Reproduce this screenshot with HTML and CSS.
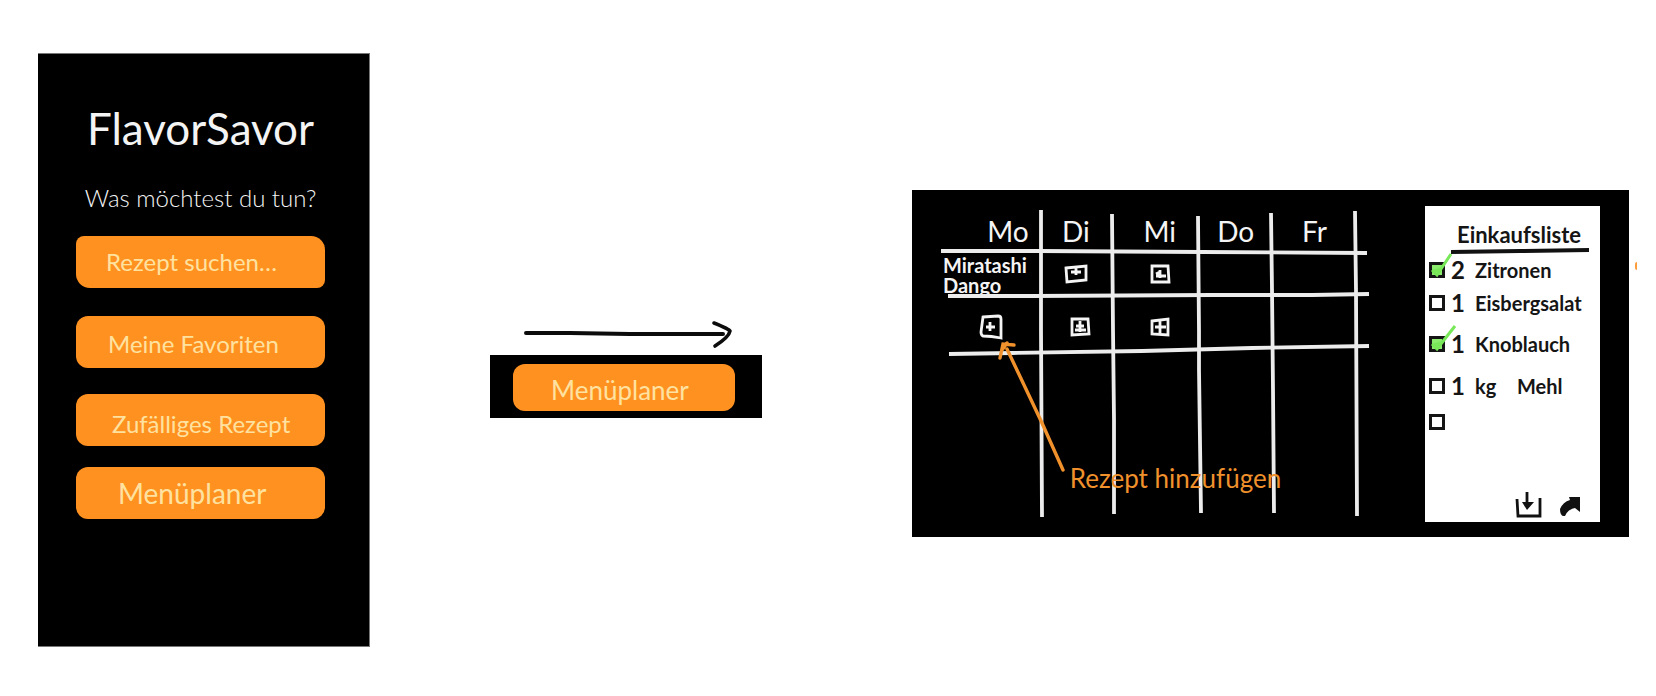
FILE: index.html
```
<!DOCTYPE html>
<html lang="de">
<head>
<meta charset="utf-8">
<meta name="viewport" content="width=device-width, initial-scale=1">
<title>FlavorSavor</title>
<link rel="stylesheet" href="styles.css">
</head>
<body>
<main class="board">
  <section class="phone">
    <h1 class="brand">FlavorSavor</h1>
    <p class="question">Was möchtest du tun?</p>
    <nav class="menu">
      <button class="pill pill-search" type="button">Rezept suchen…</button>
      <button class="pill pill-favs" type="button">Meine Favoriten</button>
      <button class="pill pill-random" type="button">Zufälliges Rezept</button>
      <button class="pill pill-planner" type="button">Menüplaner</button>
    </nav>
  </section>

  <section class="step">
    <svg class="step-arrow" viewBox="0 0 272 35" aria-hidden="true">
      <path d="M36 13 L80 13 L140 14 L233 14" stroke-width="4"/>
      <path d="M224 3 Q239 9 240 11 Q239 17 225 26" stroke-width="3.6"/>
    </svg>
    <div class="step-frame">
      <button class="pill pill-step" type="button">Menüplaner</button>
    </div>
  </section>

  <section class="planner">
    <table class="week">
      <colgroup><col class="c-mo"><col class="c-di"><col class="c-mi"><col class="c-do"><col class="c-fr"></colgroup>
      <thead>
        <tr><th class="mo">Mo</th><th>Di</th><th class="mi">Mi</th><th>Do</th><th>Fr</th></tr>
      </thead>
      <tbody>
        <tr class="row-one">
          <td class="dish">Miratashi Dango</td>
          <td><button class="add" type="button" aria-label="Rezept hinzufügen"><svg viewBox="0 0 24 20"><path d="M2 4 L22 2 L22 16 L3 18 Z M7 8 H17 M12 4 V11"/></svg></button></td>
          <td class="mi"><button class="add" type="button" aria-label="Rezept hinzufügen"><svg viewBox="0 0 24 20"><path d="M4 2 L20 2 L21 18 L4 18 Z M8 12 H18 M12 6 V14 M8 10 L12 8"/></svg></button></td>
          <td></td><td></td>
        </tr>
        <tr class="row-two">
          <td><button class="add add-large" type="button" aria-label="Rezept hinzufügen"><svg viewBox="0 0 24 26"><path d="M4 3 L19 2 Q22 2 22 5 L22 24 Q12 22 4 22 Q2 21 2 18 Z M7 13 H16 M11 8 V17"/></svg></button></td>
          <td class="late"><button class="add" type="button" aria-label="Rezept hinzufügen"><svg viewBox="0 0 24 20"><path d="M4 2 L20 2 L21 17 L4 18 Z M7 13 H18 M12 4 V15 M8 9 H16"/></svg></button></td>
          <td class="mi"><button class="add" type="button" aria-label="Rezept hinzufügen"><svg viewBox="0 0 24 20"><path d="M4 4 L20 2 L20 18 L4 17 Z M7 10 H18 M12 4 V16"/></svg></button></td>
          <td></td><td></td>
        </tr>
        <tr class="row-rest"><td></td><td></td><td></td><td></td><td></td></tr>
      </tbody>
    </table>

    <form class="list">
      <h2 class="list-title">Einkaufsliste</h2>
      <svg class="rule" viewBox="0 0 140 6" aria-hidden="true"><path d="M1 4 L70 3 L139 2"/></svg>
      <ul class="items">
        <li><label class="item"><input class="tick" type="checkbox" checked><span class="qty">2</span><span>Zitronen</span>
          <svg class="mark" viewBox="0 0 32 32" aria-hidden="true"><path d="M5 20 L10 25 L24 4 M7 21 L14 19"/></svg></label></li>
        <li><label class="item"><input class="tick" type="checkbox"><span class="qty">1</span><span>Eisbergsalat</span></label></li>
        <li><label class="item"><input class="tick" type="checkbox" checked><span class="qty">1</span><span>Knoblauch</span>
          <svg class="mark" viewBox="0 0 32 32" aria-hidden="true"><path d="M5 20 L10 25 L28 2 M7 21 L14 19"/></svg></label></li>
        <li><label class="item"><input class="tick" type="checkbox"><span class="qty">1</span><span class="unit">kg</span><span>Mehl</span></label></li>
        <li><label class="item"><input class="tick" type="checkbox" aria-label="Neuer Eintrag"></label></li>
      </ul>
      <div class="actions">
        <button class="icon" type="button" aria-label="Speichern"><svg viewBox="0 0 28 28"><path d="M3 9 L4 26 L26 26 L26 8 M13 2 V15" fill="none" stroke="#111" stroke-width="2.8"/><path d="M8 12 H20 L13 20 Z" fill="#111"/></svg></button>
        <button class="icon" type="button" aria-label="Teilen"><svg viewBox="0 0 28 28"><path d="M4 19 Q7 12 14 10 L13 7 L24 7 L24 22 L19 18 Q12 19 9 26 Q4 27 4 19 Z" fill="#111"/></svg></button>
      </div>
    </form>

    <svg class="sketch" viewBox="0 0 717 347" preserveAspectRatio="none" aria-hidden="true">
      <g class="chalk">
        <path d="M29 61 L126 61 L290 62 L455 63"/>
        <path d="M36 106 L120 106 L300 105 L400 105 L457 104"/>
        <path d="M37 164 L100 163 L230 161 L340 158 L457 156"/>
        <path d="M129 20 L129 140 L130 327"/>
        <path d="M200 24 L201 140 L202 230 L202 324"/>
        <path d="M286 26 L287 140 L287 180 L289 323"/>
        <path d="M359 23 L360 100 L361 200 L362 323"/>
        <path d="M443 21 L444 100 L445 326"/>
      </g>
      <path class="pointer" d="M151 280 L130 233 L95 159 M88 168 L91 154 L102 155 M90 160 L95 153"/>
    </svg>
    <p class="hint">Rezept hinzufügen</p>
  </section>
  <i class="speck" aria-hidden="true"></i>
</main>
</body>
</html>
```
FILE: styles.css
```
* { box-sizing: border-box; }

body {
  margin: 0;
  background: #fff;
  font-family: Lato, "Open Sans", sans-serif;
}

button, input { font: inherit; margin: 0; padding: 0; }

.board {
  display: grid;
  grid-template-columns:
    minmax(0, 38fr) minmax(0, 332fr) minmax(0, 120fr) minmax(0, 272fr)
    minmax(0, 150fr) minmax(0, 717fr) minmax(0, 27fr);
  align-items: start;
  position: relative;
}

.phone {
  grid-column: 2;
  margin: 53px 0 50px;
  padding: 42px 44px 127px 38px;
  background: #000;
  border: 1px solid #777;
  border-left: 0;
  color: #f4f4f4;
}

.brand {
  margin: 0 0 18px;
  font-size: 44px;
  font-weight: 400;
  line-height: 64px;
  text-align: center;
  white-space: nowrap;
}

.question {
  margin: 0 0 18px;
  font-size: 24px;
  font-weight: 300;
  line-height: 40px;
  text-align: center;
  white-space: nowrap;
}

.menu { display: flex; flex-direction: column; }

.pill {
  display: block;
  height: 52px;
  border: 0;
  border-radius: 12px;
  background: #ff9120;
  color: #ffe2a0;
  font-size: 24px;
  line-height: 32px;
  text-align: left;
  white-space: nowrap;
}

.pill-search { padding-left: 30px; margin: 0 0 28px; border-radius: 8px 14px 8px 14px; }
.pill-favs { padding: 4px 0 0 32px; margin: 0 0 26px; }
.pill-random { padding: 8px 0 0 36px; margin: 0 0 21px; }
.pill-planner { padding-left: 42px; font-size: 28px; }

.step { grid-column: 4; margin-top: 320px; }

.step-arrow {
  display: block;
  width: 100%;
  fill: none;
  stroke: #0c0c0c;
  stroke-linecap: round;
  stroke-linejoin: round;
}

.step-frame { padding: 9px 27px 7px 23px; background: #000; }
.pill-step { width: 100%; height: 47px; padding: 4px 0 0 38px; font-size: 26px; }

.planner {
  grid-column: 6;
  position: relative;
  display: grid;
  grid-template-columns:
    minmax(0, 29fr) minmax(0, 415fr) minmax(0, 69fr) minmax(0, 175fr) minmax(0, 29fr);
  align-items: start;
  margin-top: 190px;
  padding: 16px 0 15px;
  background: #000;
  color: #f4f4f4;
}

.week {
  grid-column: 2;
  width: 100%;
  table-layout: fixed;
  border-collapse: collapse;
}

.c-mo { width: 24%; }
.c-di { width: 17%; }
.c-mi { width: 21%; }
.c-do { width: 18%; }
.c-fr { width: 20%; }

.week th {
  height: 46px;
  padding: 4px 0 0;
  font-size: 28px;
  font-weight: 400;
  line-height: 40px;
}

.week td { padding: 0; text-align: center; }
.week .mo { padding-right: 12px; text-align: right; }
.week .mi { padding-left: 10px; }
.week .late { padding-left: 8px; }
.week .dish { padding: 2px 4px 0 2px; font-size: 20px; font-weight: 700; line-height: 20px; text-align: left; }
.row-one td { height: 43px; }
.week .row-two td { height: 55px; padding-top: 8px; }
.row-rest td { height: 168px; }

.add {
  width: 24px;
  border: 0;
  background: none;
  vertical-align: middle;
}

.add svg { display: block; fill: none; stroke: #f4f4f4; stroke-width: 2.8; }

.list {
  grid-column: 4;
  display: flex;
  flex-direction: column;
  height: 316px;
  padding: 16px 4px 2px;
  background: #fff;
  color: #151515;
}

.list-title {
  margin: 0 0 0 28px;
  font-size: 22px;
  font-weight: 700;
  line-height: 26px;
  white-space: nowrap;
}

.rule { width: 140px; margin-left: 21px; fill: none; stroke: #111; stroke-width: 4; }

.items {
  display: grid;
  grid-template-rows: 32px 34px 48px 36px 36px;
  align-items: center;
  margin: 0;
  padding: 0;
  list-style: none;
}

.item {
  position: relative;
  display: flex;
  align-items: center;
  font-size: 20px;
  font-weight: 700;
  line-height: 24px;
  white-space: nowrap;
}

.tick {
  appearance: none;
  width: 16px;
  height: 16px;
  border: 3px solid #151515;
  background: #fff;
}

.tick:checked { background: #8cec6c; }
.qty { width: 24px; margin-left: 6px; font-size: 24px; }
.unit { width: 42px; }

.mark {
  position: absolute;
  left: -2px;
  top: -8px;
  width: 32px;
  height: 32px;
  fill: none;
  stroke: #78e858;
  stroke-width: 3;
}

.actions {
  display: flex;
  justify-content: flex-end;
  gap: 14px;
  margin-top: auto;
  padding: 0 12px 0 0;
}

.icon { width: 28px; height: 32px; border: 0; background: none; }
.icon svg { display: block; width: 28px; height: 28px; }

.sketch {
  position: absolute;
  inset: 0;
  width: 100%;
  height: 100%;
  fill: none;
  pointer-events: none;
}

.chalk { stroke: #ececec; stroke-width: 3.8; }
.pointer { stroke: #f0912c; stroke-width: 3.4; stroke-linecap: round; }

.hint {
  position: absolute;
  left: 22%;
  top: 272px;
  margin: 0;
  color: #f0912c;
  font-size: 26px;
  line-height: 32px;
  white-space: nowrap;
}

.speck {
  position: absolute;
  right: 19px;
  top: 262px;
  width: 2px;
  height: 8px;
  border-radius: 4px 0 0 4px;
  background: #ff9c3c;
}
```
